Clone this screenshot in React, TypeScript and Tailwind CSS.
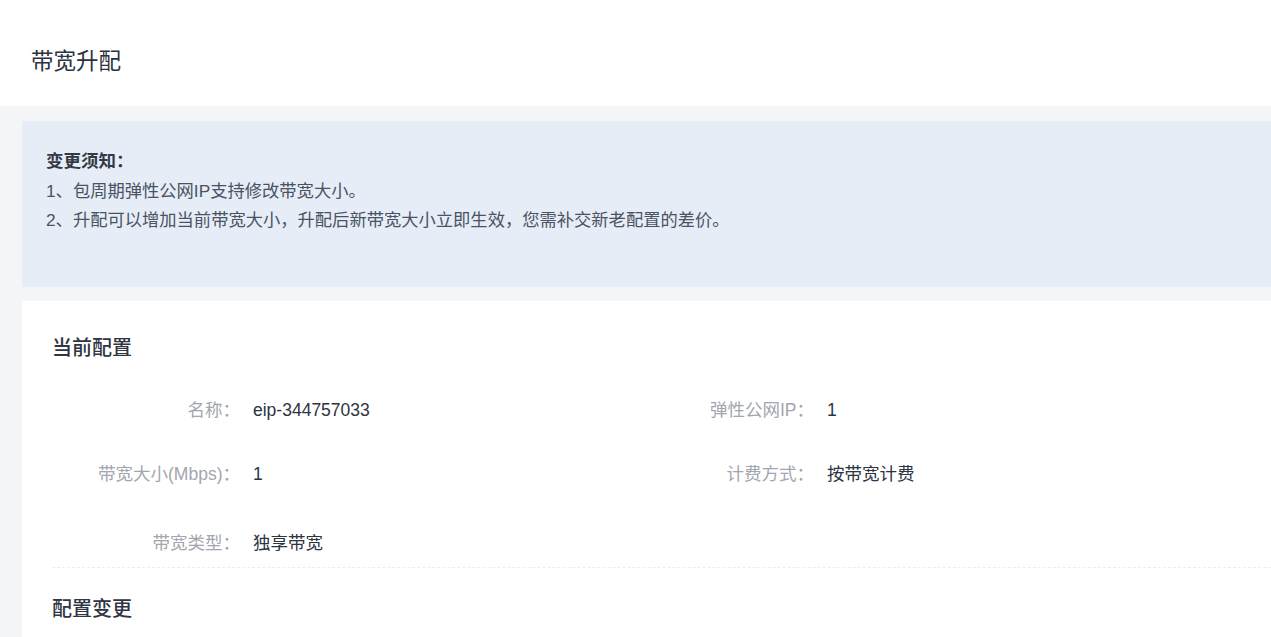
export default function App() {
  const font = { fontFamily: '"Liberation Sans", "Noto Sans CJK SC", sans-serif' };

  return (
    <div className="min-h-screen bg-[#f4f5f7] text-[#2f3542]" style={font}>
      {/* Header */}
      <div className="h-[106px] bg-white pl-[31px] pt-[48px]">
        <h1 className="text-[22.5px] leading-[28px] text-[#2b3240]">带宽升配</h1>
      </div>

      <div className="pl-[22px] pt-[15px]">
        {/* Notice */}
        <div className="h-[166px] bg-[#e6edf7] pl-[24px] pt-[26px]">
          <div className="mb-[2px] text-[17.5px] font-semibold leading-[28px] text-[#333a46]">
            变更须知：
          </div>
          <p className="text-[17.3px] leading-[29px] text-[#4a5364]">1、包周期弹性公网IP支持修改带宽大小。</p>
          <p className="text-[17.3px] leading-[29px] text-[#4a5364]">
            2、升配可以增加当前带宽大小，升配后新带宽大小立即生效，您需补交新老配置的差价。
          </p>
        </div>

        {/* Card */}
        <div className="mt-[14px] h-[336px] bg-white pl-[30px] pt-[33px]">
          <h2 className="text-[20px] font-medium leading-[28px] text-[#2f3542]">当前配置</h2>

          <div className="mt-[34px] grid grid-cols-[574px_1fr]">
            <Field label="名称：" value="eip-344757033" />
            <Field label="弹性公网IP：" value="1" />
          </div>
          <div className="mt-[36px] grid grid-cols-[574px_1fr]">
            <Field label="带宽大小(Mbps)：" value="1" />
            <Field label="计费方式：" value="按带宽计费" />
          </div>
          <div className="mt-[41px] grid grid-cols-[574px_1fr]">
            <Field label="带宽类型：" value="独享带宽" />
          </div>

          <div className="mt-[10px] border-t border-dashed border-[#eceef0]" />

          <h2 className="mt-[27px] text-[20px] font-medium leading-[28px] text-[#2f3542]">配置变更</h2>
        </div>
      </div>
    </div>
  );
}

function Field({ label, value }: { label: string; value: string }) {
  return (
    <div className="flex text-[17.5px] leading-[28px]">
      <span className="w-[188px] text-right text-[#a2a6ae]">{label}</span>
      <span className="ml-[13px] text-[#2d3441]">{value}</span>
    </div>
  );
}
